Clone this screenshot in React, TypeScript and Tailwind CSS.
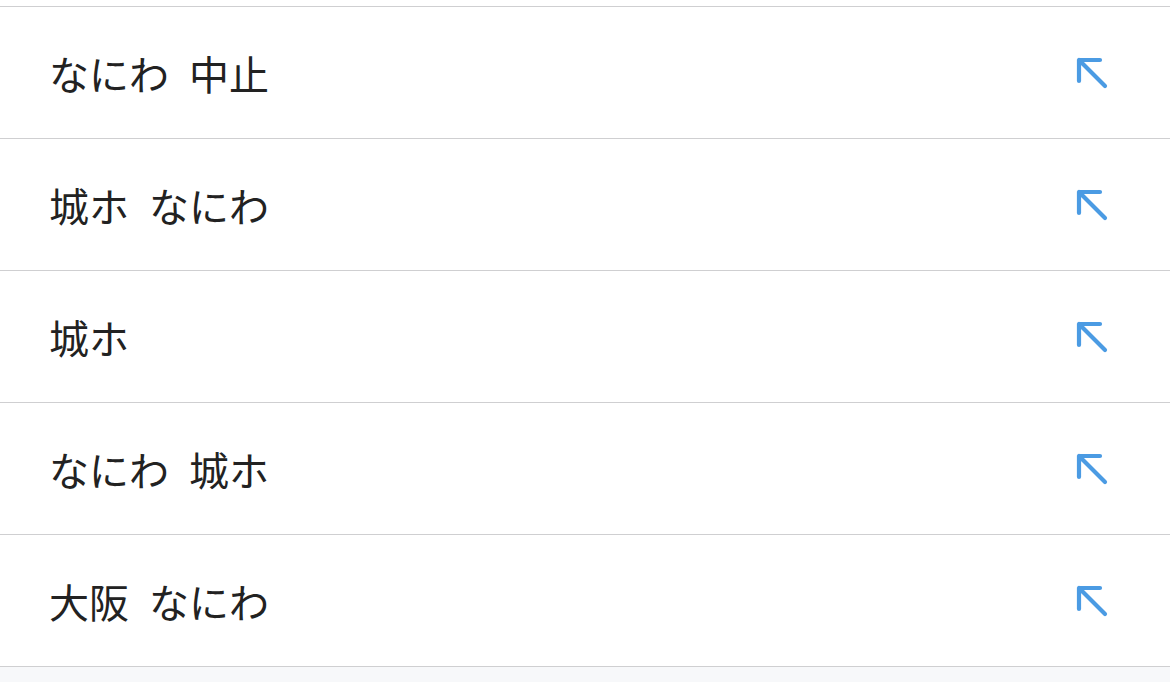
import React from "react";

const items = ["なにわ 中止", "城ホ なにわ", "城ホ", "なにわ 城ホ", "大阪 なにわ"];

function ArrowIcon() {
  return (
    <svg width="40" height="40" viewBox="0 0 40 40" fill="none" className="shrink-0">
      <path
        d="M7 28V7h21M7 7l26 26"
        stroke="#4b9be3"
        strokeWidth="4.2"
        strokeLinecap="round"
        strokeLinejoin="round"
      />
    </svg>
  );
}

export default function App() {
  return (
    <div
      className="w-[1170px] h-[682px] bg-[#f7f8fa] overflow-hidden"
      style={{ fontFamily: '"Noto Sans CJK JP", "Noto Sans", sans-serif' }}
    >
      <div className="h-[6px] bg-white" />
      <div className="bg-white border-t border-[#cfcfd1]">
        {items.map((t, i) => (
          <div
            key={i}
            className="h-[132px] flex items-center justify-between pl-[49px] pr-[58px] border-b border-[#cfcfd1]"
          >
            <span className="text-[40px] leading-none text-[#222222] [word-spacing:11px]">{t}</span>
            <ArrowIcon />
          </div>
        ))}
      </div>
    </div>
  );
}
